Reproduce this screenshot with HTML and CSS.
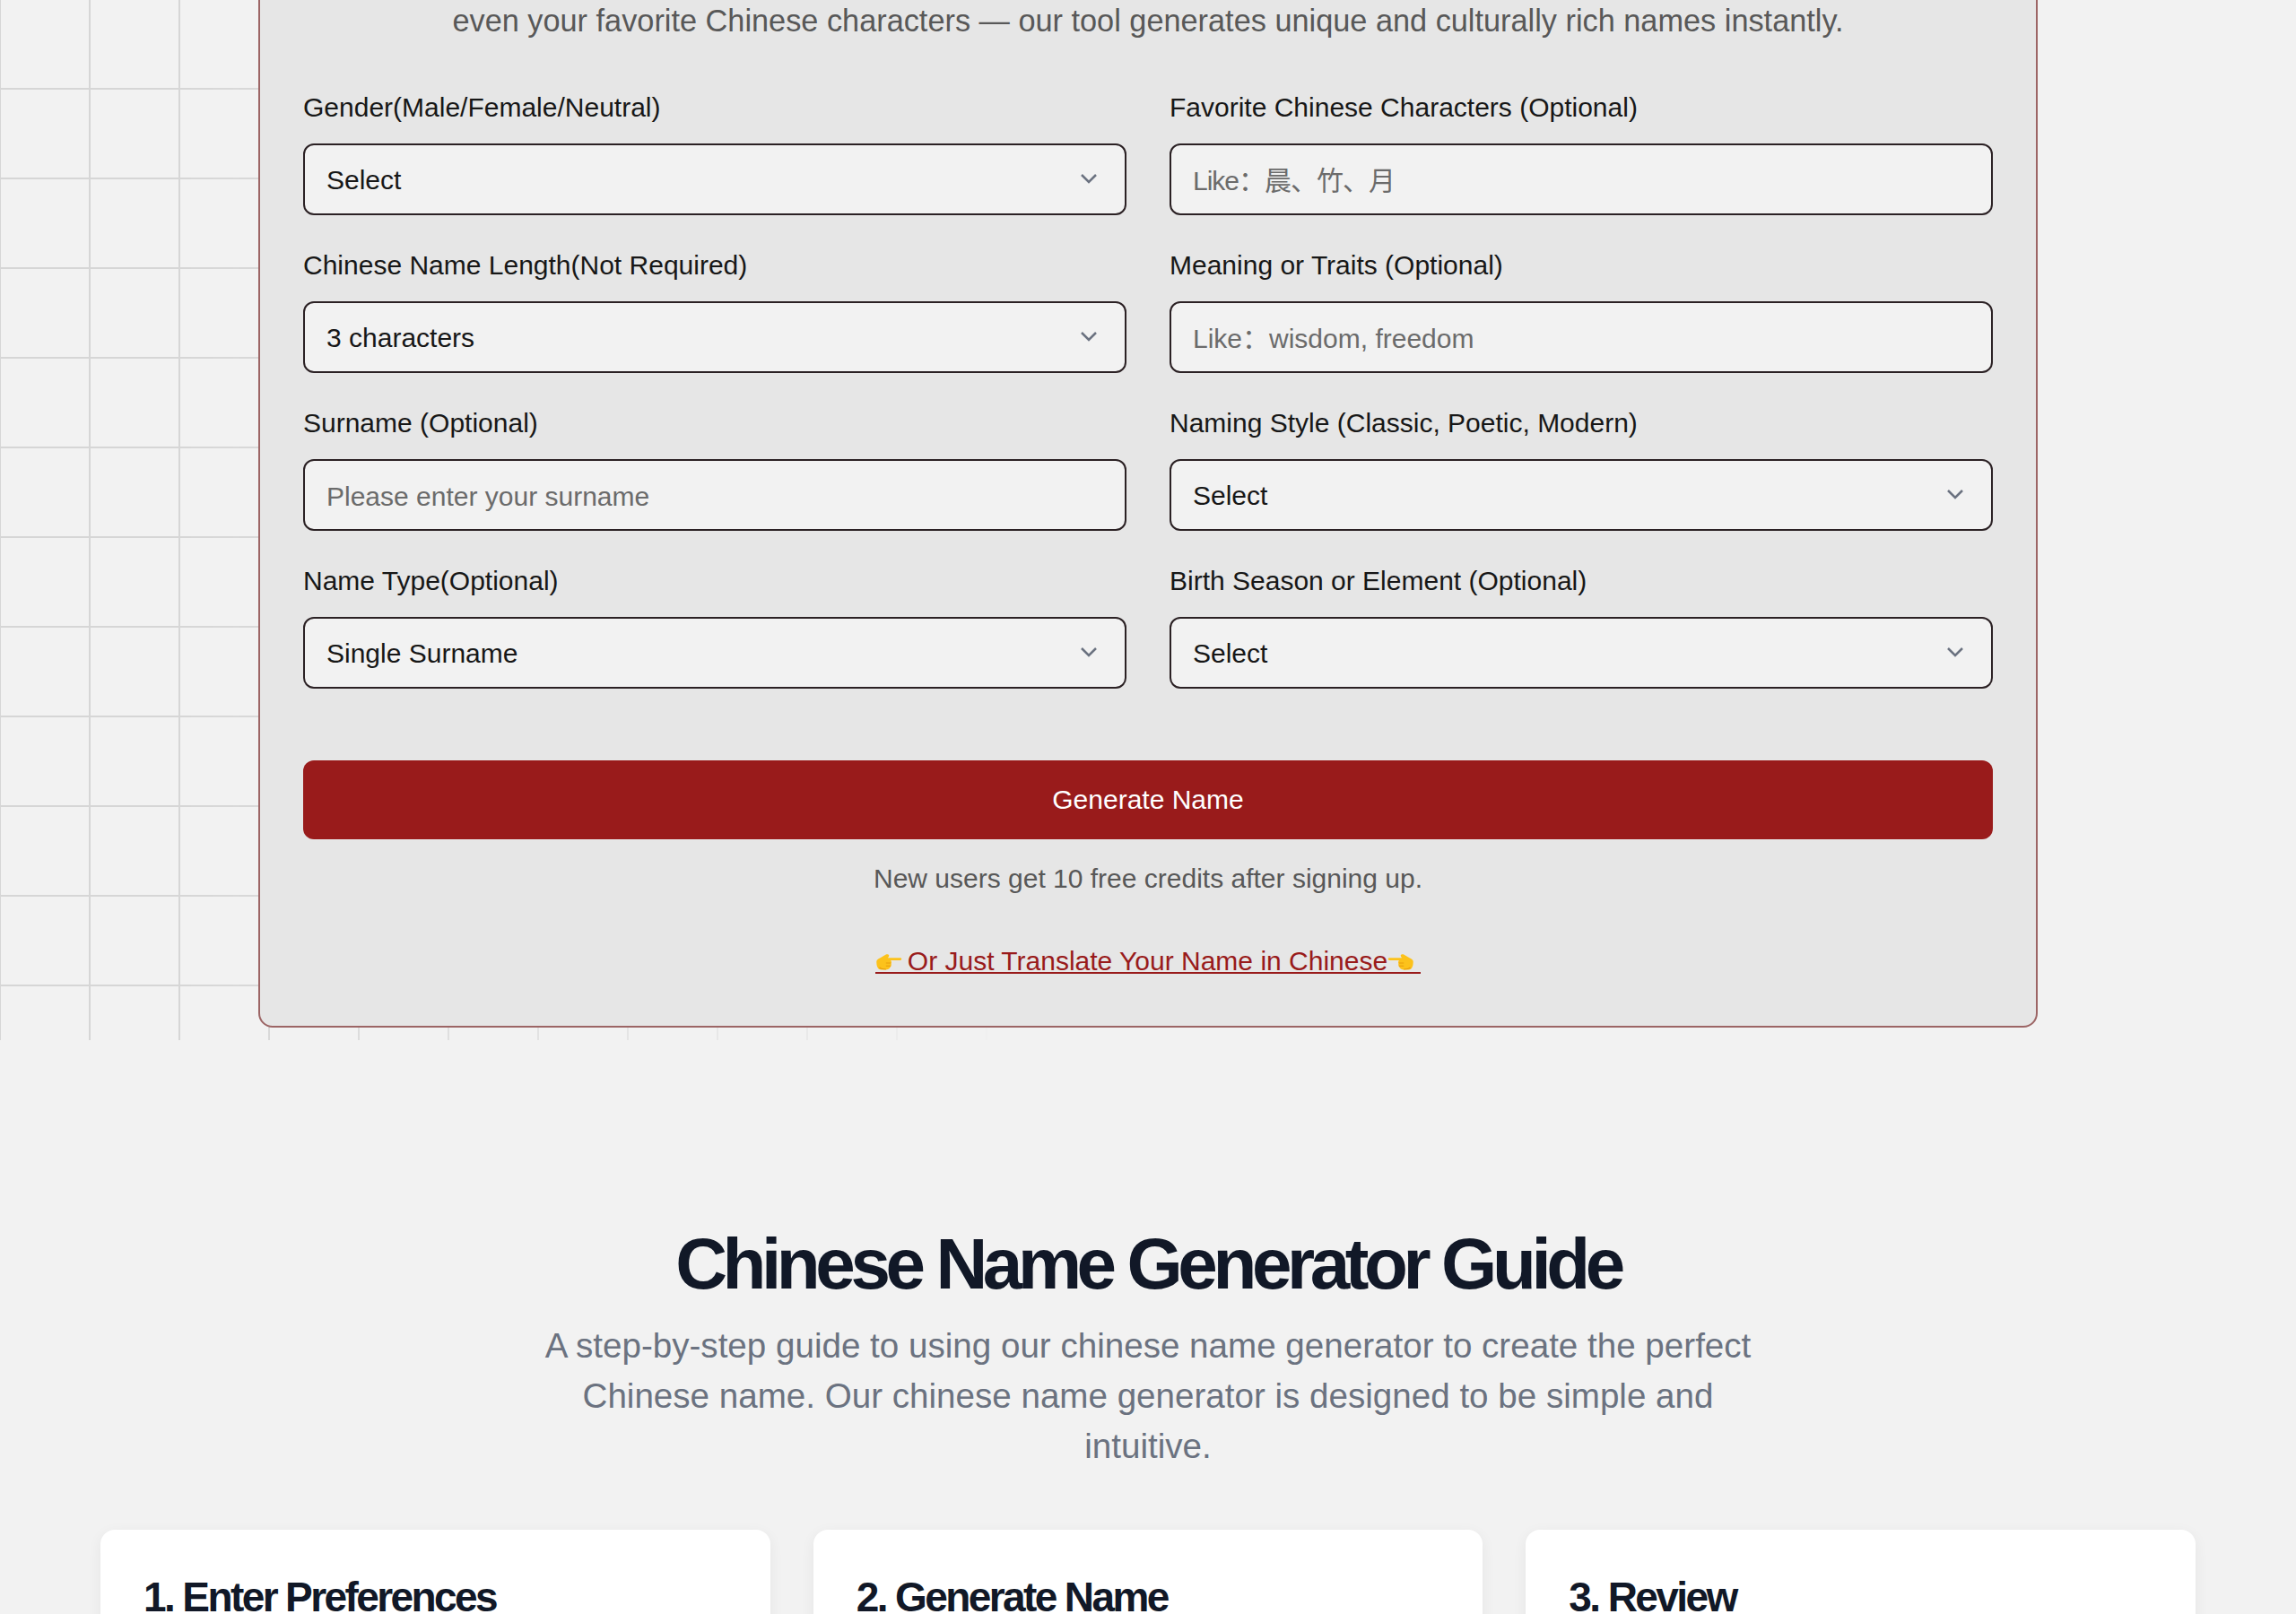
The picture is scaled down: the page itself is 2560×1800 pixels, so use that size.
FILE: index.html
```html
<!DOCTYPE html>
<html lang="en">
  <head>
    <meta charset="UTF-8" />
    <meta name="viewport" content="width=device-width, initial-scale=1.0" />
    <title>Chinese Name Generator</title>
    <link rel="stylesheet" href="styles.css">
  </head>

  <body>
    <section class="hero">
      <div class="hero-grid"></div>
      <div class="tool-card">
        <p class="intro">even your favorite Chinese characters — our tool generates unique and culturally rich names instantly.</p>
        <form class="name-form">
          <div class="field">
            <label class="field-label" for="gender">Gender(Male/Female/Neutral)</label>
            <div class="select-wrap">
              <select class="control" id="gender"><option>Select</option></select>
              <svg class="chevron" viewBox="0 0 20 12"><path d="M2 2l8 8 8-8" /></svg>
            </div>
          </div>
          <div class="field">
            <label class="field-label" for="favorite">Favorite Chinese Characters (Optional)</label>
            <input class="control control-cjk" id="favorite" type="text" placeholder="Like：晨、竹、月" />
          </div>
          <div class="field">
            <label class="field-label" for="length">Chinese Name Length(Not Required)</label>
            <div class="select-wrap">
              <select class="control" id="length"><option>3 characters</option></select>
              <svg class="chevron" viewBox="0 0 20 12"><path d="M2 2l8 8 8-8" /></svg>
            </div>
          </div>
          <div class="field">
            <label class="field-label" for="meaning">Meaning or Traits (Optional)</label>
            <input class="control" id="meaning" type="text" placeholder="Like：wisdom, freedom" />
          </div>
          <div class="field">
            <label class="field-label" for="surname">Surname (Optional)</label>
            <input class="control" id="surname" type="text" placeholder="Please enter your surname" />
          </div>
          <div class="field">
            <label class="field-label" for="style">Naming Style (Classic, Poetic, Modern)</label>
            <div class="select-wrap">
              <select class="control" id="style"><option>Select</option></select>
              <svg class="chevron" viewBox="0 0 20 12"><path d="M2 2l8 8 8-8" /></svg>
            </div>
          </div>
          <div class="field">
            <label class="field-label" for="type">Name Type(Optional)</label>
            <div class="select-wrap">
              <select class="control" id="type"><option>Single Surname</option></select>
              <svg class="chevron" viewBox="0 0 20 12"><path d="M2 2l8 8 8-8" /></svg>
            </div>
          </div>
          <div class="field">
            <label class="field-label" for="season">Birth Season or Element (Optional)</label>
            <div class="select-wrap">
              <select class="control" id="season"><option>Select</option></select>
              <svg class="chevron" viewBox="0 0 20 12"><path d="M2 2l8 8 8-8" /></svg>
            </div>
          </div>
        </form>
        <button class="generate-btn" type="button">Generate Name</button>
        <p class="credits-note">New users get 10 free credits after signing up.</p>
        <div class="translate-row">
          <a class="translate-link" href="#">
            <svg class="hand" viewBox="0 0 28 18">
              <path class="hand-palm" d="M1 9C1 7 3 6 5 5L11 1.500C13 .5 15 1.500 14 3.500L13 5H26C28 5 28 7.500 26 7.500H16C17 9 17 10 16.500 11C17 12 16.500 14 15.500 15C14.500 17 13 17.500 11 17.500H6C2 17.500 1 13 1 9Z" />
              <path class="hand-shade" d="M11 10.500H16M11 13.500H16M4 15C6 17 9 17 11 17" />
            </svg>
            <span>Or Just Translate Your Name in Chinese</span>
            <svg class="hand hand-left" viewBox="0 0 28 18">
              <path class="hand-palm" d="M1 9C1 7 3 6 5 5L11 1.500C13 .5 15 1.500 14 3.500L13 5H26C28 5 28 7.500 26 7.500H16C17 9 17 10 16.500 11C17 12 16.500 14 15.500 15C14.500 17 13 17.500 11 17.500H6C2 17.500 1 13 1 9Z" />
              <path class="hand-shade" d="M11 10.500H16M11 13.500H16M4 15C6 17 9 17 11 17" />
            </svg>
          </a>
        </div>
      </div>
    </section>

    <section class="guide">
      <h2 class="guide-title">Chinese Name Generator Guide</h2>
      <p class="guide-sub">A step-by-step guide to using our chinese name generator to create the perfect Chinese name. Our chinese name generator is designed to be simple and intuitive.</p>
      <div class="guide-cards">
        <article class="guide-card"><h3>1. Enter Preferences</h3></article>
        <article class="guide-card"><h3>2. Generate Name</h3></article>
        <article class="guide-card"><h3>3. Review</h3></article>
      </div>
    </section>
  </body>
</html>
```

FILE: styles.css
```css
html {
  box-sizing: border-box;
  font-family: "Liberation Sans", "Noto Sans CJK SC", sans-serif;
  font-size: 30px;
}

*,
*:before,
*:after {
  box-sizing: inherit;
}

body {
  margin: 0;
  height: 1800px;
  overflow: hidden;
  background-color: #f2f2f2;
  color: #171717;
}

.hero {
  position: relative;
  height: 1160px;
  display: flex;
  flex-direction: column;
  align-items: center;
}

.hero-grid {
  position: absolute;
  inset: 0;
  background-image:
    linear-gradient(to right, #d6d6d6 2px, transparent 2px),
    linear-gradient(to bottom, #d6d6d6 2px, transparent 2px);
  background-size: 100px 100px;
  background-position: 99px 98px;
  -webkit-mask-image: linear-gradient(to right, #000 200px, transparent 1180px);
  mask-image: linear-gradient(to right, #000 200px, transparent 1180px);
}

.tool-card {
  position: relative;
  width: 1984px;
  margin-top: -55px;
  padding: 48px;
  background-color: #e6e6e6;
  border: 2px solid #9c6565;
  border-radius: 16px;
}

.intro {
  margin: 0 0 45px;
  font-size: 34.3px;
  line-height: 56px;
  text-align: center;
  color: #585858;
}

.name-form {
  display: grid;
  grid-template-columns: 1fr 1fr;
  column-gap: 48px;
  row-gap: 32px;
  margin-bottom: 80px;
}

.field-label {
  display: block;
  margin-bottom: 16px;
  line-height: 48px;
}

.select-wrap {
  position: relative;
}

.control {
  display: block;
  width: 100%;
  height: 80px;
  padding: 0 24px;
  font: inherit;
  color: #171717;
  background-color: #f2f2f2;
  border: 2px solid #2b2124;
  border-radius: 12px;
  appearance: none;
  outline: none;
}

input.control {
  padding-top: 3px;
}

.control::placeholder {
  color: #6b6b6b;
  opacity: 1;
}

.control-cjk::placeholder {
  letter-spacing: -1px;
}

.chevron {
  position: absolute;
  top: 33px;
  right: 32px;
  width: 20px;
  height: 12px;
  fill: none;
  stroke: #6b7280;
  stroke-width: 2.5;
}

.generate-btn {
  display: block;
  width: 100%;
  height: 88px;
  font: inherit;
  color: #fff;
  background-color: #991b1b;
  border: 0;
  border-radius: 12px;
}

.credits-note {
  margin: 20px 0 0;
  line-height: 48px;
  text-align: center;
  color: #585858;
}

.translate-row {
  display: flex;
  justify-content: center;
  height: 48px;
  margin-top: 44px;
  padding-top: 12px;
}

.translate-link {
  display: flex;
  align-items: center;
  height: 26px;
  gap: 6px;
  line-height: 24px;
  color: #991b1b;
  text-decoration: none;
  border-bottom: 2px solid #991b1b;
}

.hand {
  width: 30px;
  height: 19px;
}

.hand-left {
  margin-left: -6px;
  margin-right: 7px;
  transform: scaleX(-1);
}

.hand-palm {
  fill: #fcc21b;
}

.hand-shade {
  fill: none;
  stroke: #e89b0c;
  stroke-width: 1;
}

.guide {
  padding: 210px 112px 0;
  text-align: center;
}

.guide-title {
  margin: 0 0 23px;
  font-size: 80px;
  line-height: 80px;
  letter-spacing: -5.4px;
  color: #111827;
}

.guide-sub {
  max-width: 1370px;
  margin: 0 auto 65px;
  font-size: 38.6px;
  line-height: 56px;
  color: #6b7280;
}

.guide-cards {
  display: grid;
  grid-template-columns: repeat(3, 1fr);
  gap: 48px;
}

.guide-card {
  height: 400px;
  padding: 43px 48px;
  text-align: left;
  background-color: #fff;
  border-radius: 16px;
  box-shadow: 0 4px 16px rgba(0, 0, 0, 0.06);
}

.guide-card h3 {
  margin: 0;
  font-size: 46px;
  line-height: 64px;
  letter-spacing: -2.6px;
  color: #111827;
}
```
